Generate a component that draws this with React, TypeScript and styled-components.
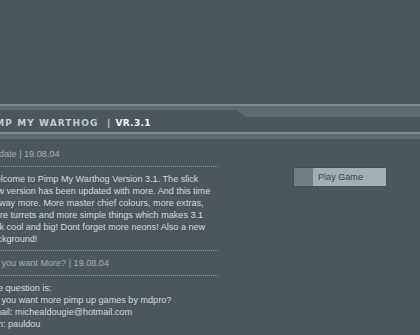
import React from "react";
import styled, { createGlobalStyle } from "styled-components";

const Global = createGlobalStyle`
  html, body {
    margin: 0;
    padding: 0;
    background: #4c575d;
    overflow: hidden;
  }
  body {
    font-family: "Liberation Sans", Arial, sans-serif;
  }
`;

const Page = styled.div`
  width: 420px;
  height: 335px;
  overflow: hidden;
  background: #4c575d;
  padding-top: 104px;
  box-sizing: border-box;
`;

const Header = styled.header`
  display: flex;
  flex-direction: column;
`;

const Stripe = styled.div<{ $h: number; $c: string }>`
  height: ${(p) => p.$h}px;
  background: ${(p) => p.$c};
`;

const BandRow = styled.div`
  display: flex;
  align-items: flex-start;
  height: 11px;
`;

const BandThin = styled.div`
  flex: 0 0 237px;
  height: 4px;
  background: #5e6c72;
`;

const BandSlope = styled.div`
  flex: 0 0 11px;
  height: 11px;
  background: #5e6c72;
  clip-path: polygon(0 0, 100% 0, 100% 100%, 80% 100%, 0 36%);
`;

const BandThick = styled.div`
  flex: 1;
  height: 11px;
  background: #5e6c72;
`;

const TitleRow = styled.div`
  height: 15px;
  display: flex;
  align-items: flex-start;
  margin-left: -17px;
  padding-top: 1px;
  box-sizing: border-box;
  font-family: "DejaVu Sans", Verdana, sans-serif;
  font-weight: bold;
  font-size: 9px;
  line-height: 10px;
  white-space: pre;
`;

const TitleText = styled.span<{ $c: string; $ls: number }>`
  color: ${(p) => p.$c};
  letter-spacing: ${(p) => p.$ls}px;
`;

const Main = styled.main`
  display: flex;
  align-items: flex-start;
  margin-left: -12.7px;
  padding-top: 9px;
  gap: 75px;
`;

const NewsColumn = styled.section`
  flex: 0 0 230.7px;
  display: flex;
  flex-direction: column;
`;

const NewsTitle = styled.div`
  font-size: 9.1px;
  line-height: 12px;
  color: #a6b0b3;
  margin-bottom: 6px;
  white-space: nowrap;
`;

const Rule = styled.div<{ $after: number }>`
  border-top: 1px dotted #8a979b;
  margin-bottom: ${(p) => p.$after}px;
`;

const NewsBody = styled.p<{ $after: number }>`
  margin: 0 0 ${(p) => p.$after}px 0;
  font-size: 9.1px;
  line-height: 12px;
  color: #d3d9da;
  white-space: nowrap;
`;

const SideColumn = styled.aside`
  padding-top: 19px;
`;

const PlayButton = styled.button`
  display: flex;
  align-items: stretch;
  width: 94px;
  height: 20px;
  padding: 0;
  border: 1px solid #435056;
  background: #a3b0b3;
  cursor: pointer;
  box-sizing: border-box;
`;

const PlayIcon = styled.span`
  flex: 0 0 19px;
  background: #6f8086;
`;

const PlayLabel = styled.span`
  padding-left: 5px;
  font-family: "Liberation Sans", Arial, sans-serif;
  font-size: 9.1px;
  line-height: 18px;
  color: #3a4449;
`;

export default function App() {
  return (
    <>
      <Global />
      <Page>
        <Header>
          <Stripe $h={2} $c="#7c8b91" />
          <BandRow>
            <BandThin />
            <BandSlope />
            <BandThick />
          </BandRow>
          <TitleRow>
            <TitleText $c="#c3cbcd" $ls={1.1}>
              {"PIMP MY WARTHOG  | "}
            </TitleText>
            <TitleText $c="#f4f6f6" $ls={0.3}>
              VR.3.1
            </TitleText>
          </TitleRow>
          <Stripe $h={2} $c="#7c8b91" />
          <Stripe $h={5} $c="#5e6c72" />
        </Header>
        <Main>
          <NewsColumn>
            <NewsTitle>Update | 19.08.04</NewsTitle>
            <Rule $after={6} />
            <NewsBody $after={5}>
              Welcome to Pimp My Warthog Version 3.1. The slick
              <br />
              new version has been updated with more. And this time
              <br />
              its way more. More master chief colours, more extras,
              <br />
              more turrets and more simple things which makes 3.1
              <br />
              look cool and big! Dont forget more neons! Also a new
              <br />
              background!
            </NewsBody>
            <Rule $after={6} />
            <NewsTitle>Do you want More? | 19.08.04</NewsTitle>
            <Rule $after={6} />
            <NewsBody $after={0}>
              The question is:
              <br />
              Do you want more pimp up games by mdpro?
              <br />
              Email: michealdougie@hotmail.com
              <br />
              Aim: pauldou
            </NewsBody>
          </NewsColumn>
          <SideColumn>
            <PlayButton type="button">
              <PlayIcon />
              <PlayLabel>Play Game</PlayLabel>
            </PlayButton>
          </SideColumn>
        </Main>
      </Page>
    </>
  );
}
